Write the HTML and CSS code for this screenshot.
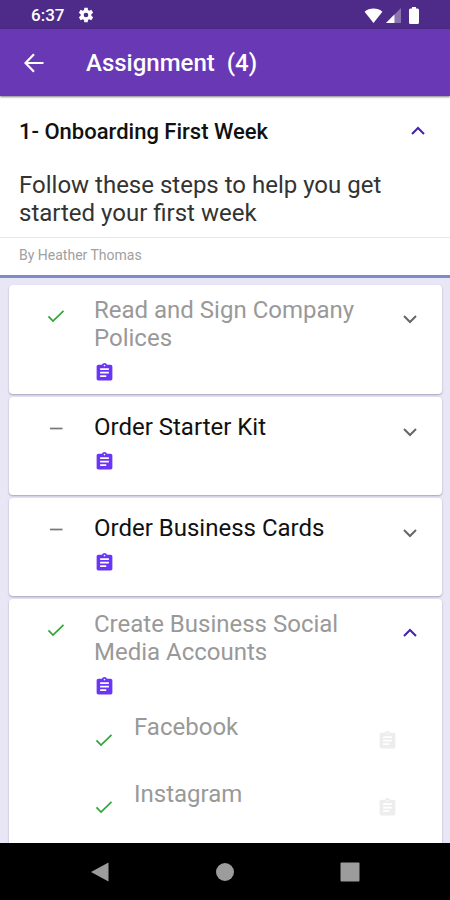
FILE: index.html
```html
<!DOCTYPE html>
<html lang="en">
<head>
<meta charset="utf-8">
<meta name="viewport" content="width=device-width, initial-scale=1">
<title>Assignment</title>
<link rel="stylesheet" href="styles.css">
</head>
<body>
<svg class="symbols" aria-hidden="true">
  <symbol id="check" viewBox="0 0 24 24"><path d="M4.5 12.3 9 17 19.5 6.8" fill="none" stroke="currentColor" stroke-width="1.7"/></symbol>
  <symbol id="dash" viewBox="0 0 24 24"><path d="M6 12.500H18.500" fill="none" stroke="currentColor" stroke-width="1.700"/></symbol>
  <symbol id="down" viewBox="0 0 24 24"><path d="M6 9l6 6 6-6" fill="none" stroke="currentColor" stroke-width="2"/></symbol>
  <symbol id="up" viewBox="0 0 24 24"><path d="M6 15l6-6 6 6" fill="none" stroke="currentColor" stroke-width="2"/></symbol>
  <symbol id="note" viewBox="0 0 24 24"><path d="M19 3h-4.180C14.400 1.840 13.300 1 12 1s-2.400.84-2.820 2H5c-1.100 0-2 .9-2 2v14c0 1.100.9 2 2 2h14c1.100 0 2-.9 2-2V5c0-1.100-.9-2-2-2zm-7 0c.55 0 1 .45 1 1s-.45 1-1 1-1-.45-1-1 .45-1 1-1zm2 14H7v-2h7v2zm3-4H7v-2h10v2zm0-4H7V7h10v2z" fill="currentColor"/></symbol>
</svg>

<div class="status">
  <span>6:37</span>
  <svg class="gear" viewBox="0 0 24 24"><path fill="currentColor" fill-rule="evenodd" d="M9.500 1h5l.5 3.500 1.800 1 3.200-1.300 2.700 4.600-2.700 2.100v2.200l2.700 2.100-2.700 4.600-3.200-1.300-1.800 1-.5 3.500h-5L9 19.500l-1.800-1L4 19.800l-2.700-4.600L4 13.100v-2.200L1.300 8.800 4 4.200l3.200 1.300 1.800-1zM12 8.500a3.500 3.500 0 1 0 0 7 3.500 3.500 0 0 0 0-7z"/></svg>
  <span class="indicators">
    <svg class="wifi" viewBox="0 0 20 16"><path fill="currentColor" d="M10 16 .5 4C5.500-.5 14.500-.5 19.500 4z"/></svg>
    <svg class="signal" viewBox="0 0 16 16"><path fill="currentColor" opacity=".35" d="M0 16 16 0v16z"/><path fill="currentColor" d="M0 16 9 7v9z"/></svg>
    <svg class="battery" viewBox="0 0 10 17"><path fill="currentColor" d="M3 0h4v1.500h1.500A1.500 1.500 0 0 1 10 3v12.500A1.500 1.500 0 0 1 8.500 17h-7A1.500 1.500 0 0 1 0 15.500V3a1.500 1.500 0 0 1 1.500-1.500H3z"/></svg>
  </span>
</div>

<header class="appbar">
  <button class="icon-button" type="button" aria-label="Back">
    <svg class="back" viewBox="0 0 20 20"><path d="M19.500 10H2M10 1.200 1.500 10l8.500 8.800" fill="none" stroke="currentColor" stroke-width="2.200"/></svg>
  </button>
  <h1>Assignment&nbsp; (4)</h1>
</header>

<section class="summary">
  <div class="summary-head">
    <h2>1- Onboarding First Week</h2>
    <button class="icon-button open" type="button" aria-label="Collapse section"><svg class="icon"><use href="#up"/></svg></button>
  </div>
  <p class="description">Follow these steps to help you get started your first week</p>
  <p class="author">By Heather Thomas</p>
</section>

<main class="tasks">
  <article class="card wrapped done">
    <svg class="icon mark"><use href="#check"/></svg>
    <div class="body"><h3>Read and Sign Company Polices</h3><svg class="note"><use href="#note"/></svg></div>
    <button class="icon-button toggle" type="button" aria-label="Expand"><svg class="icon"><use href="#down"/></svg></button>
  </article>
  <article class="card">
    <svg class="icon mark"><use href="#dash"/></svg>
    <div class="body"><h3>Order Starter Kit</h3><svg class="note"><use href="#note"/></svg></div>
    <button class="icon-button toggle" type="button" aria-label="Expand"><svg class="icon"><use href="#down"/></svg></button>
  </article>
  <article class="card">
    <svg class="icon mark"><use href="#dash"/></svg>
    <div class="body"><h3>Order Business Cards</h3><svg class="note"><use href="#note"/></svg></div>
    <button class="icon-button toggle" type="button" aria-label="Expand"><svg class="icon"><use href="#down"/></svg></button>
  </article>
  <article class="card wrapped done">
    <svg class="icon mark"><use href="#check"/></svg>
    <div class="body"><h3>Create Business Social Media Accounts</h3><svg class="note"><use href="#note"/></svg></div>
    <button class="icon-button toggle open" type="button" aria-label="Collapse"><svg class="icon"><use href="#up"/></svg></button>
    <ul class="subtasks">
      <li><svg class="icon mark"><use href="#check"/></svg><span>Facebook</span><svg class="note"><use href="#note"/></svg></li>
      <li><svg class="icon mark"><use href="#check"/></svg><span>Instagram</span><svg class="note"><use href="#note"/></svg></li>
    </ul>
  </article>
</main>

<nav class="system">
  <button class="icon-button" type="button" aria-label="System back"><svg viewBox="0 0 20 20"><path d="M1 10 18.500.5v19z" fill="currentColor"/></svg></button>
  <button class="icon-button" type="button" aria-label="Home"><svg viewBox="0 0 20 20"><circle cx="10" cy="10" r="9" fill="currentColor"/></svg></button>
  <button class="icon-button" type="button" aria-label="Recent apps"><svg viewBox="0 0 20 20"><rect x=".5" y=".5" width="19" height="19" rx="1" fill="currentColor"/></svg></button>
</nav>
</body>
</html>
```
FILE: styles.css
```css
* {
  box-sizing: border-box;
}

body {
  display: flex;
  flex-direction: column;
  height: 100vh;
  margin: 0;
  background: #fff;
  color: #111;
  font-family: Roboto, sans-serif;
}

h1, h2, h3, p, ul {
  margin: 0;
  padding: 0;
}

svg {
  display: block;
  flex: none;
}

.symbols {
  position: absolute;
  width: 0;
  height: 0;
}

.icon-button {
  display: flex;
  padding: 0;
  border: 0;
  background: none;
  color: inherit;
}

.icon {
  width: 24px;
  height: 24px;
}

.note {
  width: 21px;
  height: 21px;
  color: #6a35f5;
}

.status {
  display: flex;
  flex: none;
  align-items: center;
  height: 29px;
  padding: 1px 31px 0;
  background: #4e2b88;
  color: #fff;
  font-size: 17px;
  font-weight: 500;
}

.gear {
  width: 16px;
  height: 16px;
  margin-left: 14px;
}

.indicators {
  display: flex;
  gap: 3px;
  align-items: center;
  margin-left: auto;
}

.wifi {
  width: 19px;
  height: 15px;
}

.signal {
  width: 15px;
  height: 15px;
}

.battery {
  width: 10px;
  height: 17px;
  margin-left: 5px;
}

.appbar {
  display: flex;
  z-index: 1;
  flex: none;
  gap: 42px;
  align-items: center;
  height: 67px;
  padding: 1px 24px 0;
  background: #6938b5;
  box-shadow: 0 1px 2px rgba(0, 0, 0, 0.5);
  color: #fff;
}

.back {
  width: 20px;
  height: 20px;
}

.appbar h1 {
  font-size: 24px;
  font-weight: 500;
}

.summary {
  flex: none;
  border-bottom: 3px solid #7f8aca;
}

.summary-head {
  display: flex;
  align-items: center;
  justify-content: space-between;
  height: 70px;
  padding: 0 20px 0 19px;
}

.summary h2 {
  font-size: 22px;
  font-weight: 500;
}

.open {
  color: #4323a8;
}

.description {
  padding: 5px 60px 10px 19px;
  color: #333;
  font-size: 24px;
  font-weight: 400;
  line-height: 28px;
}

.author {
  padding: 7px 19px 10px;
  border-top: 1px solid #e8e8e8;
  color: #a0a0a0;
  font-size: 14px;
  line-height: 20px;
}

.tasks {
  display: flex;
  flex: 1;
  flex-direction: column;
  gap: 3px;
  min-height: 0;
  overflow: hidden;
  padding: 7px 8px 0 9px;
  background: #e9e6f6;
}

.card {
  display: grid;
  flex: none;
  grid-template-columns: 85px 1fr 80px;
  align-items: start;
  min-height: 98px;
  padding: 16px 0 11px;
  border-radius: 4px;
  background: #fff;
  box-shadow: 0 1px 2px rgba(40, 30, 70, 0.35);
}

.card.wrapped {
  padding-top: 11px;
}

.card h3 {
  font-size: 24px;
  font-weight: 400;
  line-height: 28px;
}

.body .note {
  margin-top: 10px;
}

.done {
  color: #999;
}

.card > .mark {
  margin: 3px 0 0 35px;
  color: #777;
}

.card.wrapped > .mark {
  margin-top: 8px;
}

.card.done .mark {
  color: #2fa638;
}

.toggle {
  justify-self: end;
  margin: 7px 20px 0 0;
  color: #666;
}

.wrapped .toggle {
  margin-top: 11px;
}

.toggle.open {
  color: #4323a8;
}

.subtasks {
  grid-column: 1 / -1;
  padding-bottom: 12px;
  list-style: none;
}

.subtasks li {
  display: grid;
  grid-template-columns: 42px 1fr 21px;
  align-items: center;
  height: 67px;
  padding: 0 44px 0 83px;
}

.subtasks span {
  align-self: start;
  padding-top: 16px;
  font-size: 24px;
  line-height: 28px;
}

.subtasks .mark,
.subtasks .note {
  margin-top: 19px;
}

.subtasks .note {
  color: #ededed;
}

.system {
  display: flex;
  flex: none;
  align-items: center;
  justify-content: space-between;
  height: 57px;
  padding: 0 20%;
  background: #000;
  color: #9c9c9c;
}

.system svg {
  width: 20px;
  height: 20px;
}
```
